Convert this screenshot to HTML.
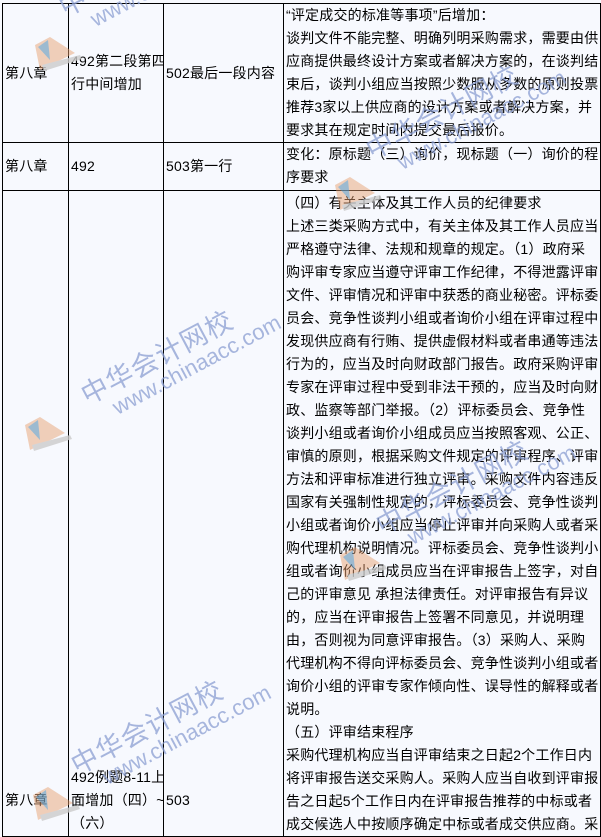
<!DOCTYPE html>
<html><head><meta charset="utf-8"><style>
html,body{margin:0;padding:0;width:601px;height:837px;overflow:hidden;}
body{background:#f7f9fe;position:relative;font-family:"Liberation Sans","Noto Sans CJK SC",sans-serif;font-size:14px;letter-spacing:0.2px;color:#000;}
table{position:absolute;left:2px;top:3px;border-collapse:collapse;table-layout:fixed;width:598px;}
td{border:1.5px solid #000;padding:0 0 0 2px;line-height:23px;white-space:nowrap;overflow:hidden;}
.wm{position:absolute;color:#8c9fd2;opacity:.75;transform:rotate(-28deg);transform-origin:left bottom;line-height:1;pointer-events:none;z-index:2;white-space:nowrap;letter-spacing:0}
.wm .a{font-size:27px;letter-spacing:1px}
.wm .b{font-size:22px;margin-left:22px;font-family:"Liberation Sans",sans-serif}
.logo{position:absolute;width:55px;height:40px;z-index:2;opacity:.8}
</style></head><body>
<table>
<colgroup><col style="width:66px"><col style="width:95px"><col style="width:120px"><col style="width:317px"></colgroup>
<tr style="height:139px"><td>第八章</td><td>492第二段第四<br>行中间增加</td><td>502最后一段内容</td><td style="vertical-align:top">“评定成交的标准等事项”后增加：<br>谈判文件不能完整、明确列明采购需求，需要由供<br>应商提供最终设计方案或者解决方案的，在谈判结<br>束后，谈判小组应当按照少数服从多数的原则投票<br>推荐3家以上供应商的设计方案或者解决方案，并<br>要求其在规定时间内提交最后报价。</td></tr>
<tr style="height:48px"><td>第八章</td><td>492</td><td>503第一行</td><td style="vertical-align:top">变化：原标题（三）询价，现标题（一）询价的程<br>序要求</td></tr>
<tr style="height:646px"><td style="vertical-align:top;padding-top:598px">第八章</td><td style="vertical-align:top;padding-top:575px">492例题8-11上<br>面增加（四）~<br>（六）</td><td style="vertical-align:top;padding-top:598px">503</td><td style="vertical-align:top;padding-top:1px">（四）有关主体及其工作人员的纪律要求<br>上述三类采购方式中，有关主体及其工作人员应当<br>严格遵守法律、法规和规章的规定。（1）政府采<br>购评审专家应当遵守评审工作纪律，不得泄露评审<br>文件、评审情况和评审中获悉的商业秘密。评标委<br>员会、竞争性谈判小组或者询价小组在评审过程中<br>发现供应商有行贿、提供虚假材料或者串通等违法<br>行为的，应当及时向财政部门报告。政府采购评审<br>专家在评审过程中受到非法干预的，应当及时向财<br>政、监察等部门举报。（2）评标委员会、竞争性<br>谈判小组或者询价小组成员应当按照客观、公正、<br>审慎的原则，根据采购文件规定的评审程序、评审<br>方法和评审标准进行独立评审。采购文件内容违反<br>国家有关强制性规定的，评标委员会、竞争性谈判<br>小组或者询价小组应当停止评审并向采购人或者采<br>购代理机构说明情况。评标委员会、竞争性谈判小<br>组或者询价小组成员应当在评审报告上签字，对自<br>己的评审意见 承担法律责任。对评审报告有异议<br>的，应当在评审报告上签署不同意见，并说明理<br>由，否则视为同意评审报告。（3）采购人、采购<br>代理机构不得向评标委员会、竞争性谈判小组或者<br>询价小组的评审专家作倾向性、误导性的解释或者<br>说明。<br>（五）评审结束程序<br>采购代理机构应当自评审结束之日起2个工作日内<br>将评审报告送交采购人。采购人应当自收到评审报<br>告之日起5个工作日内在评审报告推荐的中标或者<br>成交候选人中按顺序确定中标或者成交供应商。采</td></tr>
</table>
<div class="wm" style="left:78px;top:-8px"><div class="a">中华会计网校</div><div class="b">www.chinaacc.com</div></div>
<div class="wm" style="left:385px;top:135px"><div class="a">中华会计网校</div><div class="b">www.chinaacc.com</div></div>
<div class="wm" style="left:100px;top:380px"><div class="a">中华会计网校</div><div class="b">www.chinaacc.com</div></div>
<div class="wm" style="left:395px;top:510px"><div class="a">中华会计网校</div><div class="b">www.chinaacc.com</div></div>
<div class="wm" style="left:90px;top:750px"><div class="a">中华会计网校</div><div class="b">www.chinaacc.com</div></div>
<svg class="logo" style="left:30px;top:35px" viewBox="0 0 55 40"><path d="M5 10 L20 2 L45 18 L10 35 Z" fill="#e8a070" opacity=".6"/><path d="M8 12 L18 5 L20 25 Z" fill="#5a9fd0" opacity=".7"/><path d="M12 30 L50 20 L52 24 L14 36Z" fill="#ccc"/></svg>
<svg class="logo" style="left:330px;top:175px" viewBox="0 0 55 40"><path d="M5 10 L20 2 L45 18 L10 35 Z" fill="#e8a070" opacity=".6"/><path d="M8 12 L18 5 L20 25 Z" fill="#5a9fd0" opacity=".7"/><path d="M12 30 L50 20 L52 24 L14 36Z" fill="#ccc"/></svg>
<svg class="logo" style="left:20px;top:415px" viewBox="0 0 55 40"><path d="M5 10 L20 2 L45 18 L10 35 Z" fill="#e8a070" opacity=".6"/><path d="M8 12 L18 5 L20 25 Z" fill="#5a9fd0" opacity=".7"/><path d="M12 30 L50 20 L52 24 L14 36Z" fill="#ccc"/></svg>
<svg class="logo" style="left:335px;top:545px" viewBox="0 0 55 40"><path d="M5 10 L20 2 L45 18 L10 35 Z" fill="#e8a070" opacity=".6"/><path d="M8 12 L18 5 L20 25 Z" fill="#5a9fd0" opacity=".7"/><path d="M12 30 L50 20 L52 24 L14 36Z" fill="#ccc"/></svg>
<svg class="logo" style="left:28px;top:785px" viewBox="0 0 55 40"><path d="M5 10 L20 2 L45 18 L10 35 Z" fill="#e8a070" opacity=".6"/><path d="M8 12 L18 5 L20 25 Z" fill="#5a9fd0" opacity=".7"/><path d="M12 30 L50 20 L52 24 L14 36Z" fill="#ccc"/></svg>
</body></html>
